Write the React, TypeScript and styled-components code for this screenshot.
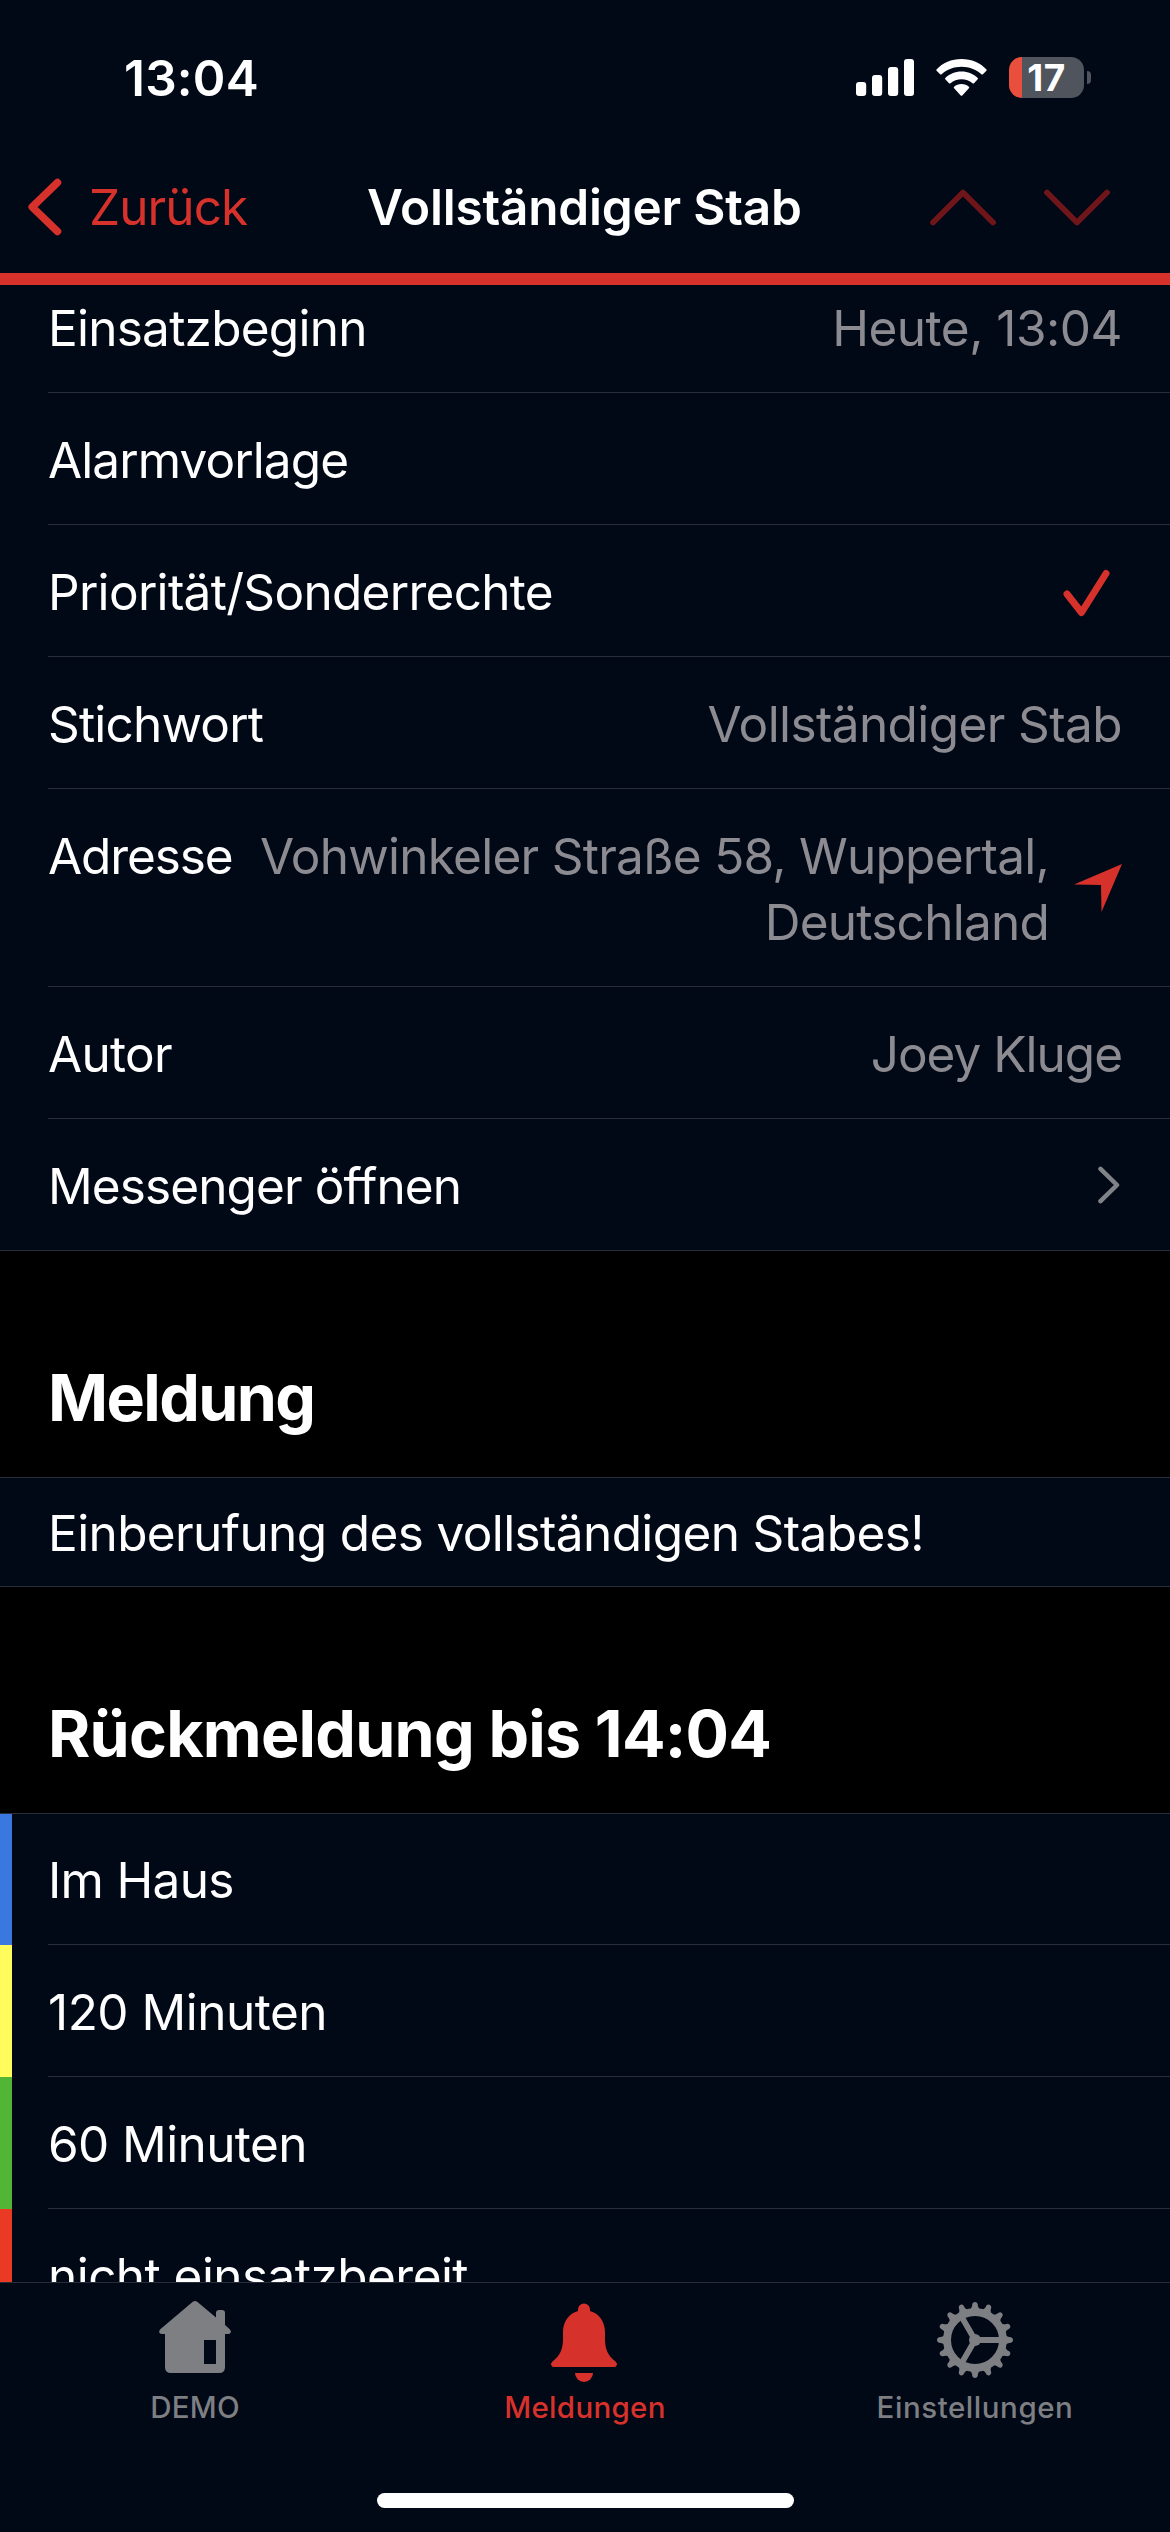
import React from "react";
import styled, { createGlobalStyle } from "styled-components";

const red = "#d7312b";
const navy = "#010816";
const line = "#282d39";

const Global = createGlobalStyle`
  * { box-sizing: border-box; }
  body { margin: 0; background: #000; }
`;

const Screen = styled.main`
  width: 1170px;
  height: 2532px;
  overflow: hidden;
  display: flex;
  flex-direction: column;
  background: #000;
  color: #fff;
  font-family: Inter, "Liberation Sans", sans-serif;
  font-size: 49.5px;
  font-variant-ligatures: none;
`;

const StatusBar = styled.div`
  flex: none;
  height: 141px;
  padding: 14px 79px 0 124px;
  background: ${navy};
  display: flex;
  align-items: center;
  justify-content: space-between;
`;

const Spaced = styled.span<{ $ls?: number }>`
  letter-spacing: ${(p) => p.$ls ?? 0}px;
  white-space: nowrap;
`;

const Clock = styled(Spaced)`
  font-weight: 600;
  line-height: 60px;
`;

const StatusIcons = styled.div`
  display: flex;
  align-items: center;
  svg { display: block; }
`;

const Wifi = styled.svg`
  margin: 0 22px;
`;

const Battery = styled.div`
  width: 75px;
  height: 41px;
  border-radius: 13px;
  display: flex;
  align-items: center;
  justify-content: center;
  background: linear-gradient(to right, #ea4e3d 13px, #4f545d 13px);
  font-size: 37px;
  font-weight: 700;
  line-height: 41px;
`;

const BatteryCap = styled.div`
  width: 4px;
  height: 13px;
  margin-left: 3px;
  border-radius: 0 4px 4px 0;
  background: #4f545d;
`;

const NavBar = styled.header`
  flex: none;
  height: 144px;
  padding: 0 60px 0 28px;
  border-bottom: 12px solid ${red};
  background: ${navy};
  display: grid;
  grid-template-columns: 339px 1fr 180px;
  align-items: center;
`;

const Back = styled.div`
  display: flex;
  align-items: center;
  gap: 27px;
  color: ${red};
  line-height: 60px;
`;

const Title = styled(Spaced)`
  font-weight: 600;
  line-height: 60px;
`;

const Arrows = styled.div`
  display: flex;
  gap: 48px;
`;

const Content = styled.section`
  flex: 1;
  min-height: 0;
  overflow: hidden;
`;

const Scrolled = styled.div`
  margin-top: -24px;
`;

const Row = styled.div<{ $full?: boolean; $height?: number; $bar?: string }>`
  height: ${(p) => p.$height ?? 132}px;
  display: flex;
  background: ${(p) =>
    p.$bar ? `linear-gradient(to right, ${p.$bar} 12px, ${navy} 12px)` : navy};
  padding-left: ${(p) => (p.$full ? 0 : 48)}px;
`;

const RowBody = styled.div<{ $full?: boolean; $pad?: number }>`
  flex: 1;
  display: flex;
  align-items: flex-start;
  justify-content: space-between;
  padding: ${(p) => p.$pad ?? 34}px 48px 0 ${(p) => (p.$full ? 48 : 0)}px;
  border-bottom: 1px solid ${line};
  line-height: 66px;
`;

const Value = styled.div`
  color: #8c8b91;
  text-align: right;
  display: flex;
  flex-direction: column;
  align-items: flex-end;
`;

const Trailing = styled.div`
  display: flex;
  align-items: flex-start;
`;

const Icon = styled.svg<{ $mt?: number; $mr?: number; $ml?: number }>`
  display: block;
  flex: none;
  margin: ${(p) => p.$mt ?? 0}px ${(p) => p.$mr ?? 0}px 0 ${(p) => p.$ml ?? 0}px;
`;

const SectionHead = styled.h2`
  margin: 0;
  height: 227px;
  padding: 108px 48px 0;
  border-bottom: 1px solid ${line};
  font-size: 64.5px;
  font-weight: 700;
  line-height: 78px;
`;

const TabBar = styled.nav`
  flex: none;
  height: 250px;
  border-top: 1px solid ${line};
  background: ${navy};
  display: flex;
  flex-direction: column;
  align-items: center;
`;

const Tabs = styled.div`
  width: 100%;
  height: 210px;
  display: grid;
  grid-template-columns: repeat(3, 1fr);
`;

const Tab = styled.div<{ $active?: boolean }>`
  display: flex;
  flex-direction: column;
  align-items: center;
  color: ${(p) => (p.$active ? red : "#7d7f83")};
  font-size: 29.5px;
  font-weight: 500;
  line-height: 36px;
  padding-top: 14px;
`;

const TabIcon = styled.svg`
  width: 90px;
  height: 90px;
  display: block;
  margin-bottom: 2px;
`;

const HomeIndicator = styled.div`
  width: 417px;
  height: 15px;
  border-radius: 8px;
  background: #fff;
`;

const House = () => (
  <TabIcon viewBox="0 0 90 90" fill="currentColor">
    <path
      fillRule="evenodd"
      d="M42.500 5 Q45 2.800 47.500 5 L66 20.500 V16 Q66 13 69 13 H72 Q75 13 75 16 V28 L80 32.500 Q81.500 34.500 80.500 36 Q79.500 37 78 37 H75 V70 Q75 76 69 76 H21 Q15 76 15 70 V37 H12 Q10.500 37 9.500 36 Q8.500 34.500 10 32.500 Z M54 43 V67 H66 V43 Z"
    />
  </TabIcon>
);

const Bell = () => (
  <TabIcon viewBox="0 0 90 90" fill="currentColor">
    <path d="M38 14 V12.500 A6 6 0 0 1 50 12.500 V14 C59 16.500 65 24.500 65 35 V42 C65 52 68 59 75.500 64.500 Q77 66 77 67.500 Q76.500 70 74 70 H14 Q11.500 70 11 67.500 Q11 66 12.500 64.500 C20 59 23 52 23 42 V35 C23 24.500 29 16.500 38 14 Z" />
    <path d="M35 76 H53 A9 9 0 0 1 35 76 Z" />
  </TabIcon>
);

const teeth = Array.from({ length: 16 }, (_, i) => i * 22.5);

const Gear = () => (
  <TabIcon viewBox="0 0 90 90" fill="none" stroke="currentColor">
    <circle cx="45" cy="43" r="27.900" strokeWidth="7.800" />
    {teeth.map((a) => (
      <path
        key={a}
        d="M75 37 Q77 40.300 81 40.300 A2.800 2.800 0 0 1 81 45.700 Q77 45.700 75 49 Z"
        fill="currentColor"
        stroke="none"
        transform={`rotate(${a} 45 43)`}
      />
    ))}
    <circle cx="45" cy="43" r="6" fill="currentColor" stroke="none" />
    <path d="M45 43 H71 M45 43 L32 20.500 M45 43 L32 65.500" strokeWidth="5.800" />
  </TabIcon>
);

const responses = [
  { label: "Im Haus", color: "#3a78e0", ls: -0.7 },
  { label: "120 Minuten", color: "#fffc5b", ls: -0.5 },
  { label: "60 Minuten", color: "#53b535", ls: -0.6 },
  { label: "nicht einsatzbereit", color: "#ea3a24", ls: -0.55 },
];

export default function App() {
  return (
    <Screen>
      <Global />
      <StatusBar>
        <Clock $ls={0.2}>13:04</Clock>
        <StatusIcons>
          <svg width="58" height="37" viewBox="0 0 58 37" fill="#fff">
            <rect x="0" y="23" width="10.200" height="14" rx="3" />
            <rect x="16" y="16" width="10.200" height="21" rx="3" />
            <rect x="32" y="8" width="10.200" height="29" rx="3" />
            <rect x="48" y="0" width="10" height="37" rx="3" />
          </svg>
          <Wifi width="51" height="37" viewBox="0 0 51 37" fill="#fff">
            <path d="M25.500 0 C35.500 0 44.500 4 50.500 10.500 Q51 11.200 50.400 11.800 L46.900 15.200 Q46.200 15.900 45.400 15.200 C40 10.500 33 7.800 25.500 7.800 C18 7.800 11 10.500 5.600 15.200 Q4.800 15.900 4.100 15.200 L.6 11.800 Q0 11.200 .5 10.500 C6.500 4 15.500 0 25.500 0 Z" />
            <path d="M25.500 12.500 C32 12.500 37.600 15 41.700 18.900 Q42.300 19.600 41.700 20.300 L38 24.200 Q37.300 24.900 36.500 24.200 C33.500 21.600 29.700 20.200 25.500 20.200 C21.300 20.200 17.500 21.600 14.500 24.200 Q13.700 24.900 13 24.200 L9.300 20.300 Q8.700 19.600 9.300 18.900 C13.400 15 19 12.500 25.500 12.500 Z" />
            <path d="M25.500 25 C28.400 25 31 26 32.900 27.700 Q33.600 28.500 32.900 29.200 L26.300 36.400 Q25.500 37.200 24.700 36.400 L18.100 29.200 Q17.400 28.500 18.100 27.700 C20 26 22.600 25 25.500 25 Z" />
          </Wifi>
          <Battery>
            <Spaced $ls={0.5}>17</Spaced>
          </Battery>
          <BatteryCap />
        </StatusIcons>
      </StatusBar>

      <NavBar>
        <Back>
          <svg width="34" height="58" viewBox="0 0 34 58" fill="none" stroke={red} strokeWidth="7.500" strokeLinecap="round" strokeLinejoin="round">
            <path d="M29.500 4.500 L4.200 29 L29.500 53.500" />
          </svg>
          <Spaced $ls={-0.9}>Zurück</Spaced>
        </Back>
        <Title $ls={-0.2}>Vollständiger Stab</Title>
        <Arrows>
          <svg width="66" height="37" viewBox="0 0 66 37" fill="none" stroke="#6f161b" strokeWidth="5.800" strokeLinecap="round" strokeLinejoin="round">
            <path d="M3 33.500 L33 3.500 L63 33.500" />
          </svg>
          <svg width="66" height="37" viewBox="0 0 66 37" fill="none" stroke="#6f161b" strokeWidth="5.800" strokeLinecap="round" strokeLinejoin="round">
            <path d="M3 3.500 L33 33.500 L63 3.500" />
          </svg>
        </Arrows>
      </NavBar>

      <Content>
        <Scrolled>
          <Row>
            <RowBody>
              <Spaced $ls={-0.75}>Einsatzbeginn</Spaced>
              <Value><Spaced $ls={-0.5}>Heute, 13:04</Spaced></Value>
            </RowBody>
          </Row>
          <Row>
            <RowBody><Spaced $ls={-0.9}>Alarmvorlage</Spaced></RowBody>
          </Row>
          <Row>
            <RowBody>
              <Spaced $ls={-0.7}>Priorität/Sonderrechte</Spaced>
              <Icon $mt={10} $mr={12} width="48" height="50" viewBox="0 0 48 50" fill="none" stroke={red} strokeWidth="7" strokeLinecap="round" strokeLinejoin="round">
                <path d="M5 25 L19.500 43.500 L44 4.500" />
              </Icon>
            </RowBody>
          </Row>
          <Row>
            <RowBody>
              <Spaced $ls={-0.8}>Stichwort</Spaced>
              <Value><Spaced $ls={-0.6}>Vollständiger Stab</Spaced></Value>
            </RowBody>
          </Row>
          <Row $height={198}>
            <RowBody>
              <Spaced $ls={-1.1}>Adresse</Spaced>
              <Trailing>
                <Value>
                  <Spaced $ls={-0.74}>Vohwinkeler Straße 58, Wuppertal,</Spaced>
                  <Spaced $ls={-0.75}>Deutschland</Spaced>
                </Value>
                <Icon $mt={41} $ml={25} width="48" height="48" viewBox="0 0 48 48" fill={red}>
                  <path d="M48 0 L0 20.500 L27 21 L27.500 48 Z" />
                </Icon>
              </Trailing>
            </RowBody>
          </Row>
          <Row>
            <RowBody>
              <Spaced $ls={-0.7}>Autor</Spaced>
              <Value><Spaced $ls={-1}>Joey Kluge</Spaced></Value>
            </RowBody>
          </Row>
          <Row $full>
            <RowBody $full>
              <Spaced $ls={-0.9}>Messenger öffnen</Spaced>
              <Icon $mt={13} $mr={2} width="22" height="38" viewBox="0 0 22 38" fill="none" stroke="#808489" strokeWidth="4.500" strokeLinecap="round" strokeLinejoin="round">
                <path d="M2.500 2.800 L19 19 L2.500 35.200" />
              </Icon>
            </RowBody>
          </Row>

          <SectionHead><Spaced $ls={-1.6}>Meldung</Spaced></SectionHead>
          <Row $full $height={109}>
            <RowBody $full $pad={22}><Spaced $ls={-0.62}>Einberufung des vollständigen Stabes!</Spaced></RowBody>
          </Row>

          <SectionHead><Spaced $ls={-0.77}>Rückmeldung bis 14:04</Spaced></SectionHead>
          {responses.map((r, i) => (
            <Row key={r.label} $bar={r.color} $height={i === 0 ? 131 : 132}>
              <RowBody $pad={i === 0 ? 33 : 34}><Spaced $ls={r.ls}>{r.label}</Spaced></RowBody>
            </Row>
          ))}
        </Scrolled>
      </Content>

      <TabBar>
        <Tabs>
          <Tab><House /><Spaced $ls={0.2}>DEMO</Spaced></Tab>
          <Tab $active><Bell /><Spaced $ls={0.3}>Meldungen</Spaced></Tab>
          <Tab><Gear /><Spaced $ls={0.55}>Einstellungen</Spaced></Tab>
        </Tabs>
        <HomeIndicator />
      </TabBar>
    </Screen>
  );
}
